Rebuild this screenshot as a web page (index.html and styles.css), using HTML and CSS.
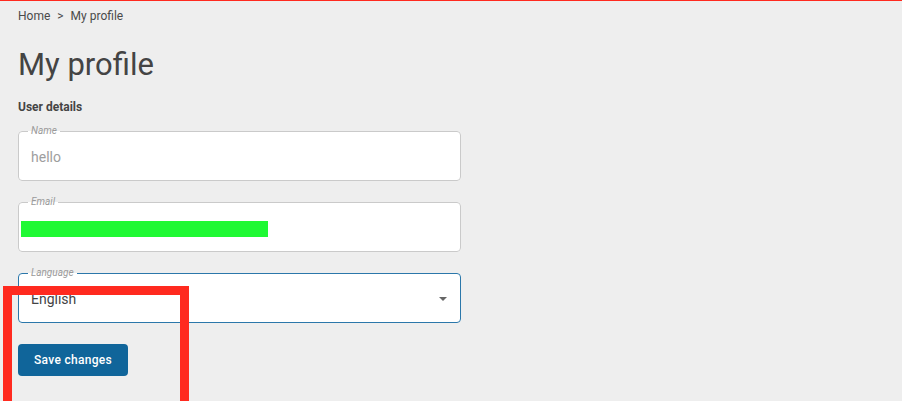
FILE: index.html
```html
<!DOCTYPE html>
<html lang="en">
<head>
<meta charset="utf-8">
<title>My profile</title>
<link rel="stylesheet" href="styles.css">
</head>
<body>
<div class="topline"></div>
<main class="page">
  <nav class="crumbs"><span>Home</span><span class="sep">&gt;</span><span>My profile</span></nav>
  <h1 class="title">My profile</h1>
  <h2 class="section">User details</h2>
  <form class="form">
    <fieldset class="field">
      <legend class="legend">Name</legend>
      <div class="value muted">hello</div>
    </fieldset>
    <fieldset class="field">
      <legend class="legend">Email</legend>
      <div class="value"><span class="redact"></span></div>
    </fieldset>
    <fieldset class="field focus">
      <legend class="legend">Language</legend>
      <div class="value select"><span>English</span><span class="caret"></span></div>
    </fieldset>
    <button type="button" class="btn">Save changes</button>
  </form>
</main>
<div class="annot"></div>
</body>
</html>
```
FILE: styles.css
```css
html, body {
  margin: 0;
  padding: 0;
  background: #eeeeee;
  font-family: Roboto, "Liberation Sans", sans-serif;
  color: #444;
  height: 100%;
  overflow: hidden;
}
.topline {
  height: 1px;
  background: #ff2a1f;
}
.page {
  padding: 7px 0 0 18px;
}
.crumbs {
  font-size: 12px;
  line-height: 16px;
  color: #4a4a4a;
  display: flex;
  gap: 7px;
}
.title {
  margin: 23px 0 0;
  font-size: 31px;
  line-height: 36px;
  font-weight: 400;
  color: #444;
}
.section {
  margin: 16px 0 0;
  font-size: 12px;
  line-height: 16px;
  font-weight: 700;
  color: #444;
}
.form {
  margin-top: 10px;
  display: flex;
  flex-direction: column;
  align-items: flex-start;
}
.field {
  width: 443px;
  box-sizing: border-box;
  margin: 0 0 15px;
  padding: 0 2px;
  border: 1px solid #cacaca;
  border-radius: 4px;
  background: #fff;
  min-width: 0;
}
.field.focus {
  border-color: #2b77aa;
  margin-bottom: 21px;
}
.legend {
  margin-left: 7px;
  padding: 0 3px;
  font-size: 10px;
  line-height: 12px;
  font-style: italic;
  color: #9a9a9a;
}
.value {
  height: 39px;
  padding: 0 0 4px 10px;
  display: flex;
  align-items: center;
  font-size: 14px;
  color: #444;
}
.value.muted {
  color: #9e9e9e;
}
.redact {
  display: block;
  width: 247px;
  height: 16px;
  margin-left: -10px;
  margin-top: 3px;
  background: #1ff934;
}
.select {
  justify-content: space-between;
  padding-right: 11px;
}
.caret {
  width: 0;
  height: 0;
  border-left: 4px solid transparent;
  border-right: 4px solid transparent;
  border-top: 4px solid #666;
}
.btn {
  height: 32px;
  padding: 0 16px;
  border: 0;
  border-radius: 4px;
  background: #10659a;
  color: #fff;
  font-family: Roboto, "Liberation Sans", sans-serif;
  font-size: 12px;
  font-weight: 500;
  letter-spacing: 0.3px;
}
.annot {
  position: absolute;
  left: 3px;
  top: 286px;
  width: 168px;
  height: 115px;
  border: 9px solid #ff2a1f;
  border-bottom: 0;
}
```
